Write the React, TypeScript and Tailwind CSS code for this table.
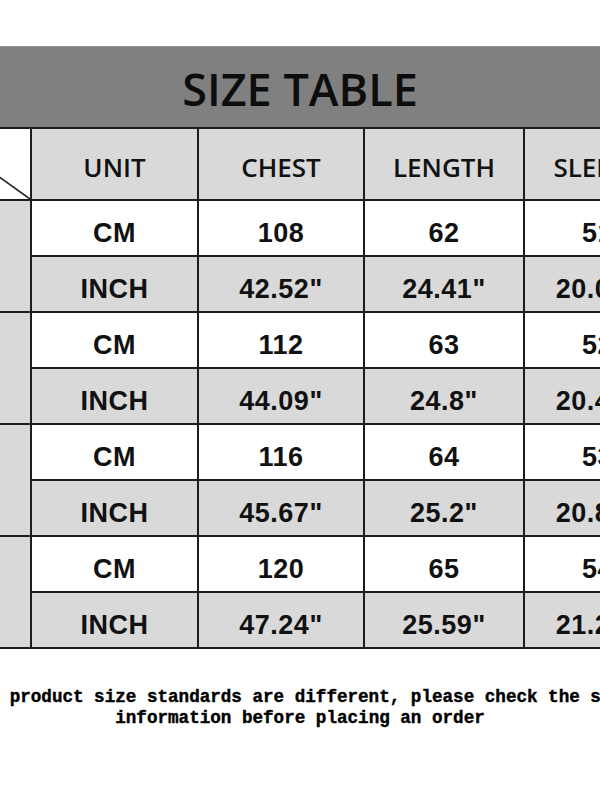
import React from "react";

const rows = [
  { cm: ["108", "62", "51"], inch: ['42.52"', '24.41"', '20.08"'] },
  { cm: ["112", "63", "52"], inch: ['44.09"', '24.8"', '20.47"'] },
  { cm: ["116", "64", "53"], inch: ['45.67"', '25.2"', '20.87"'] },
  { cm: ["120", "65", "54"], inch: ['47.24"', '25.59"', '21.26"'] },
];

const headFont = { fontFamily: '"Open Sans", "Liberation Sans", sans-serif' };
const dataFont = { fontFamily: '"Liberation Sans", Arial, sans-serif' };

function Cell({ children, gray }: { children: React.ReactNode; gray?: boolean }) {
  return (
    <div
      className={`flex items-center justify-center pt-[10px] text-[27px] font-bold text-[#111] whitespace-nowrap tracking-[0.5px] ${
        gray ? "bg-[#d9d9d9]" : "bg-white"
      }`}
      style={dataFont}
    >
      {children}
    </div>
  );
}

function HeadCell({ children }: { children: React.ReactNode }) {
  return (
    <div
      className="flex items-center justify-center pt-[6px] bg-[#d9d9d9] text-[26px] font-semibold text-[#111] whitespace-nowrap"
      style={headFont}
    >
      {children}
    </div>
  );
}

export default function App() {
  return (
    <div className="w-[600px] h-[800px] bg-white overflow-hidden pt-[46px]">
      <div
        className="h-[81px] bg-[#808080] border-t border-[#9a9a9a] flex items-center justify-center pt-[4px] text-[45px] font-semibold text-[#0d0d0d]"
        style={headFont}
      >
        SIZE TABLE
      </div>
      <div className="overflow-hidden">
        <div className="ml-[-68px] w-[680px] bg-[#1c1c1c] py-[2px] grid grid-cols-[98px_165px_164px_158px_145px] grid-rows-[70px_repeat(8,54px)] gap-[2px]">
          <div className="relative bg-white">
            <svg className="absolute inset-0" width="98" height="70" viewBox="0 0 98 70">
              <line x1="0" y1="0" x2="98" y2="70" stroke="#222" strokeWidth="1.6" />
            </svg>
          </div>
          <HeadCell>UNIT</HeadCell>
          <HeadCell>CHEST</HeadCell>
          <HeadCell>LENGTH</HeadCell>
          <HeadCell>SLEEVE</HeadCell>
          {rows.map((r, i) => (
            <React.Fragment key={i}>
              <div className="row-span-2 bg-[#d9d9d9]" />
              <Cell>CM</Cell>
              {r.cm.map((v, j) => (
                <Cell key={j}>{v}</Cell>
              ))}
              <Cell gray>INCH</Cell>
              {r.inch.map((v, j) => (
                <Cell key={j} gray>
                  {v}
                </Cell>
              ))}
            </React.Fragment>
          ))}
        </div>
      </div>
      <div
        className="mt-[38px] flex flex-col items-center text-[17.6px] leading-[21px] font-bold text-black overflow-hidden [-webkit-text-stroke:0.4px_black]"
        style={{ fontFamily: '"Liberation Mono", "DejaVu Sans Mono", monospace' }}
      >
        <div className="whitespace-nowrap">The product size standards are different, please check the size</div>
        <div className="whitespace-nowrap">information before placing an order</div>
      </div>
    </div>
  );
}
